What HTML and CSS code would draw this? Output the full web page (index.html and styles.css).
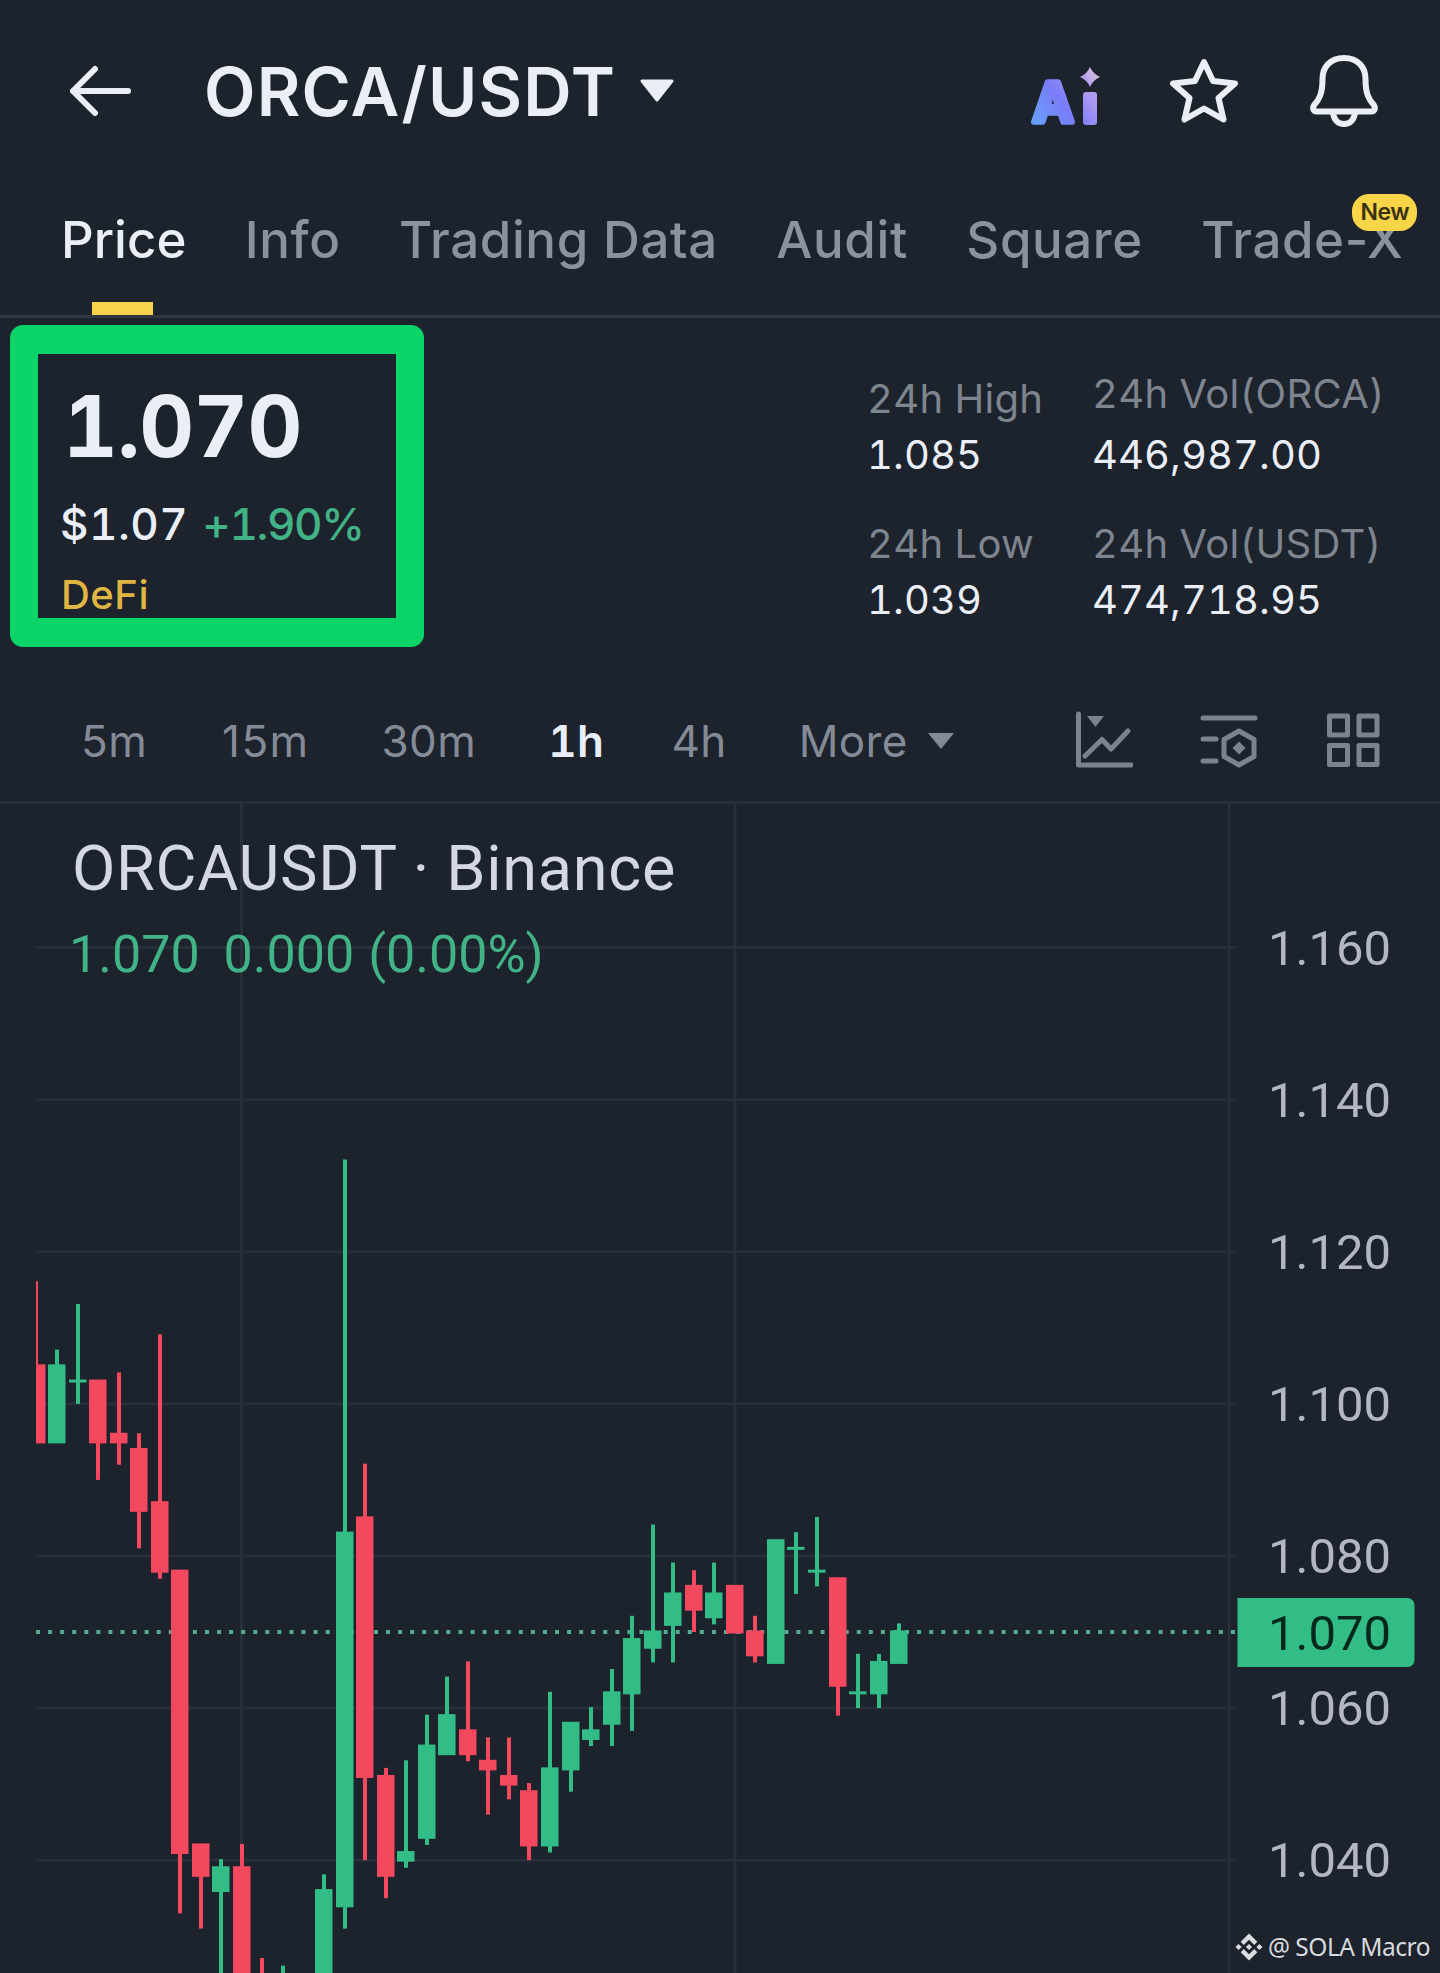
FILE: index.html
```
<!DOCTYPE html>
<html lang="en">
<head>
  <meta charset="UTF-8">
  <meta name="viewport" content="width=device-width, initial-scale=1.0">
  <title>ORCA/USDT</title>
  <link rel="stylesheet" href="styles.css">
</head>
<body>
  <div class="app">
    <header class="header">
      <svg class="back" width="64" height="52" viewBox="0 0 64 52">
        <path d="M26 4 L4 26 L26 48 M4 26 H59" />
      </svg>
      <h1 class="pair">ORCA/USDT</h1>
      <svg class="pair-caret" width="36" height="24" viewBox="0 0 36 24">
        <path d="M3 2 H33 L18 21 Z" />
      </svg>
      <div class="header-icons">
        <svg class="ai" width="76" height="64" viewBox="0 0 76 64">
          <defs>
            <linearGradient id="ai-fill" gradientUnits="userSpaceOnUse" x1="2" y1="60" x2="74" y2="10">
              <stop offset="0" stop-color="#62a6fb" />
              <stop offset="0.45" stop-color="#7a7cf8" />
              <stop offset="0.8" stop-color="#b49cf0" />
              <stop offset="1" stop-color="#d9c6d8" />
            </linearGradient>
          </defs>
          <text class="ai-letter" x="26" y="57.5" text-anchor="middle">A</text>
          <rect x="56" y="28" width="14" height="33" rx="3" />
          <path d="M63 3 Q66 10 73 13 Q66 16 63 23 Q60 16 53 13 Q60 10 63 3 Z" />
        </svg>
        <svg class="star" width="70" height="68" viewBox="0 0 70 68">
          <path d="M35 5 L44 24 L66 26.500 L49.500 41 L54.500 62.500 L35 51.500 L15.500 62.500 L20.500 41 L4 26.500 L26 24 Z" />
        </svg>
        <svg class="bell" width="70" height="76" viewBox="0 0 70 76">
          <path d="M35 5 C21 5 13.500 14.500 13.500 26 C13.500 41 10 46.500 5.500 51.500 C3 55 4 58.500 8 58.500 H62 C66 58.500 67 55 64.500 51.500 C60 46.500 56.500 41 56.500 26 C56.500 14.500 49 5 35 5 Z" />
          <path d="M24 60 C25 67 29 71 35 71 C41 71 45 67 46 60" />
        </svg>
      </div>
    </header>

    <nav class="tabs">
      <a class="tab active">Price</a>
      <a class="tab">Info</a>
      <a class="tab">Trading Data</a>
      <a class="tab">Audit</a>
      <a class="tab">Square</a>
      <a class="tab">Trade-X<span class="badge">New</span></a>
    </nav>

    <section class="summary">
      <div class="price-box">
        <div class="last-price">1.070</div>
        <div class="price-row">
          <span class="fiat">$1.07</span>
          <span class="change">+1.90%</span>
        </div>
        <div class="tag">DeFi</div>
      </div>
      <div class="stats">
        <div class="stats-col prices">
          <div class="label">24h High</div>
          <div class="value">1.085</div>
          <div class="label">24h Low</div>
          <div class="value">1.039</div>
        </div>
        <div class="stats-col volumes">
          <div class="label">24h Vol(ORCA)</div>
          <div class="value">446,987.00</div>
          <div class="label">24h Vol(USDT)</div>
          <div class="value">474,718.95</div>
        </div>
      </div>
    </section>

    <div class="toolbar">
      <div class="intervals">
        <span>5m</span>
        <span>15m</span>
        <span>30m</span>
        <span class="active">1h</span>
        <span>4h</span>
        <span>More</span>
      </div>
      <svg class="more-caret" width="30" height="20" viewBox="0 0 30 20">
        <path d="M2 2 H28 L15 18 Z" />
      </svg>
      <div class="tools">
        <svg width="58" height="58" viewBox="0 0 58 58">
          <path class="line" d="M3.500 3 V54 H56 M10 45 L27 28.500 L36 38 L53 20" />
          <path class="solid" d="M12 5 H29 L20.500 16 Z" />
        </svg>
        <svg width="58" height="58" viewBox="0 0 58 58">
          <path class="line" d="M3 7 H55 M3 28 H16 M3 50 H16 M39 20 L54 28.500 V45.500 L39 54 L24 45.500 V28.500 Z" />
          <path class="solid" d="M39 30.500 L45.500 37 L39 43.500 L32.500 37 Z" />
        </svg>
        <svg width="58" height="58" viewBox="0 0 58 58">
          <path class="line" d="M4.500 5 H22.500 V24 H4.500 Z M34 5 H52 V24 H34 Z M4.500 34.500 H22.500 V53.500 H4.500 Z M34 34.500 H52 V53.500 H34 Z" />
        </svg>
      </div>
    </div>

    <section class="chart">
      <svg id="chart" width="1440" height="1169" viewBox="0 0 1440 1169"></svg>
      <div class="legend">
        <div class="symbol">ORCAUSDT · Binance</div>
        <div class="ohlc"><span>1.070</span><span>0.000</span><span>(0.00%)</span></div>
      </div>
      <div class="watermark">
        <svg width="28" height="28" viewBox="0 0 28 28">
          <path d="M14 0.500 L22.300 8.800 L19.200 11.900 L14 6.700 L8.800 11.900 L5.700 8.800 Z" />
          <path d="M14 27.500 L22.300 19.200 L19.200 16.100 L14 21.300 L8.800 16.100 L5.700 19.200 Z" />
          <path d="M14 10.900 L17.100 14 L14 17.100 L10.900 14 Z M3.600 10.900 L6.700 14 L3.600 17.100 L0.500 14 Z M24.400 10.900 L27.500 14 L24.400 17.100 L21.300 14 Z" />
        </svg>
        <span>@ SOLA Macro</span>
      </div>
    </section>
  </div>

  <script>
    // [open, high, low, close]
    const candles = [
      [1.105, 1.116, 1.095, 1.095],
      [1.095, 1.107, 1.095, 1.105],
      [1.103, 1.113, 1.100, 1.103],
      [1.103, 1.103, 1.090, 1.095],
      [1.096, 1.104, 1.092, 1.095],
      [1.094, 1.096, 1.081, 1.086],
      [1.087, 1.109, 1.077, 1.078],
      [1.078, 1.078, 1.033, 1.041],
      [1.042, 1.042, 1.031, 1.038],
      [1.036, 1.040, 1.018, 1.039],
      [1.039, 1.042, 1.015, 1.018],
      [1.020, 1.027, 1.012, 1.018],
      [1.018, 1.026, 1.012, 1.020],
      [1.018, 1.025, 1.012, 1.020],
      [1.020, 1.038, 1.015, 1.036],
      [1.034, 1.132, 1.031, 1.083],
      [1.085, 1.092, 1.040, 1.051],
      [1.051, 1.052, 1.035, 1.038],
      [1.040, 1.053, 1.039, 1.041],
      [1.043, 1.059, 1.042, 1.055],
      [1.054, 1.064, 1.054, 1.059],
      [1.057, 1.066, 1.053, 1.054],
      [1.053, 1.056, 1.046, 1.052],
      [1.051, 1.056, 1.048, 1.050],
      [1.049, 1.050, 1.040, 1.042],
      [1.042, 1.062, 1.041, 1.052],
      [1.052, 1.058, 1.049, 1.058],
      [1.056, 1.060, 1.055, 1.057],
      [1.058, 1.065, 1.055, 1.062],
      [1.062, 1.072, 1.057, 1.069],
      [1.068, 1.084, 1.066, 1.070],
      [1.071, 1.079, 1.066, 1.075],
      [1.076, 1.078, 1.070, 1.073],
      [1.072, 1.079, 1.071, 1.075],
      [1.076, 1.076, 1.070, 1.070],
      [1.070, 1.072, 1.066, 1.067],
      [1.066, 1.082, 1.066, 1.082],
      [1.081, 1.083, 1.075, 1.081],
      [1.078, 1.085, 1.076, 1.078],
      [1.077, 1.077, 1.059, 1.063],
      [1.062, 1.067, 1.060, 1.062],
      [1.062, 1.067, 1.060, 1.066],
      [1.066, 1.071, 1.066, 1.070]
    ];

    const chart = document.getElementById('chart');
    const left = 36;
    const step = 20.54;
    const lastPrice = 1.070;

    function priceToY(price) {
      return 828 - (price - lastPrice) * 7605;
    }

    function draw(tag, attrs, text) {
      const el = document.createElementNS('http://www.w3.org/2000/svg', tag);
      for (const key in attrs) {
        el.setAttribute(key, attrs[key]);
      }
      if (text) {
        el.textContent = text;
      }
      chart.appendChild(el);
    }

    function drawGrid() {
      [241.5, 735, 1229].forEach(x => {
        draw('line', { class: 'grid', x1: x, x2: x, y1: 0, y2: 1169 });
      });
      [1.16, 1.14, 1.12, 1.1, 1.08, 1.06, 1.04].forEach(price => {
        const y = priceToY(price);
        draw('line', { class: 'grid', x1: left, x2: 1236, y1: y, y2: y });
        draw('text', { class: 'axis-label', x: 1268, y: y + 17 }, price.toFixed(3));
      });
    }

    function drawCandles() {
      candles.forEach(([open, high, low, close], i) => {
        const x = Math.round(36.5 + i * step);
        const cls = close >= open ? 'up' : 'down';
        const start = Math.max(x - 9, left);
        const top = priceToY(Math.max(open, close)) - 1.5;
        const bottom = priceToY(Math.min(open, close)) + 1.5;
        const wickTop = priceToY(high) - 1;
        const wickX = Math.max(x - 2, left);
        draw('rect', { class: cls, x: wickX, y: wickTop, width: i ? 4 : 2, height: priceToY(low) - wickTop });
        draw('rect', { class: cls, x: start, y: top, width: x + 8.5 - start, height: bottom - top });
      });
    }

    function drawLastPrice() {
      const y = priceToY(lastPrice);
      draw('path', { class: 'tag-bg', d: `M1237.5 ${y - 34} h170 a7 7 0 0 1 7 7 v55 a7 7 0 0 1 -7 7 h-170 z` });
      draw('text', { class: 'axis-label current', x: 1268, y: y + 17.5 }, lastPrice.toFixed(3));
    }

    drawGrid();
    draw('line', { class: 'last-line', x1: left, x2: 1236, y1: priceToY(lastPrice), y2: priceToY(lastPrice) });
    drawCandles();
    drawLastPrice();
  </script>
</body>
</html>
```
FILE: styles.css
```
* {
  box-sizing: border-box;
}

body {
  margin: 0;
  background-color: #1d232d;
  color: #eaeef7;
  font-family: Inter, Roboto, sans-serif;
}

.app {
  width: 1440px;
  height: 1973px;
  overflow: hidden;
}

.header {
  display: flex;
  align-items: center;
  height: 182px;
  padding: 0 61px 0 69px;
}

.back path {
  fill: none;
  stroke: #eaeef7;
  stroke-width: 6;
  stroke-linecap: round;
  stroke-linejoin: round;
}

.pair {
  margin: 1px 0 0 71px;
  font-size: 67px;
  font-weight: 600;
  letter-spacing: 1.2px;
  line-height: 80px;
}

.pair-caret {
  margin-left: 23px;
  fill: #eaeef7;
  stroke: #eaeef7;
  stroke-width: 3;
  stroke-linejoin: round;
}

.header-icons {
  display: flex;
  align-items: center;
  margin: -1px 0 0 auto;
}

.ai {
  overflow: visible;
  margin: 11px 66px 0 0;
  fill: url(#ai-fill);
}

.ai-letter {
  font-size: 55px;
  font-weight: 700;
  stroke: url(#ai-fill);
  stroke-width: 5.5;
  stroke-linejoin: round;
}

.star {
  margin-right: 70px;
}

.star path,
.bell path {
  fill: none;
  stroke: #eaeef7;
  stroke-width: 6;
  stroke-linejoin: round;
}

.tabs {
  display: flex;
  gap: 58.5px;
  height: 136px;
  padding-left: 61px;
  border-bottom: 3px solid #323842;
}

.tab {
  position: relative;
  color: #8b919d;
  font-size: 51px;
  font-weight: 500;
  letter-spacing: 0.6px;
  line-height: 116px;
  white-space: nowrap;
}

.tab.active {
  color: #eaeef7;
  letter-spacing: 0;
}

.tab.active::after {
  content: "";
  position: absolute;
  left: 31px;
  bottom: 0;
  width: 61px;
  height: 13px;
  background-color: #f6d34b;
}

.badge {
  position: absolute;
  top: 12px;
  right: -14px;
  width: 65px;
  height: 37px;
  border-radius: 17px;
  background-color: #f8d548;
  color: #3a3013;
  font-size: 23px;
  font-weight: 600;
  letter-spacing: -0.5px;
  line-height: 37px;
  text-align: center;
}

.summary {
  display: flex;
  height: 362px;
  font-variant-numeric: tabular-nums;
}

.price-box {
  width: 414px;
  height: 322px;
  margin: 7px 0 0 10px;
  padding-left: 23px;
  border: 29px solid #0bd468;
  border-width: 29px 28px;
  border-radius: 13px;
}

.last-price {
  margin-left: 2px;
  font-size: 85px;
  font-weight: 700;
  letter-spacing: -0.8px;
  line-height: 146px;
}

.price-row {
  display: flex;
  gap: 14px;
  margin: -2px 0 0 -1px;
  font-size: 44px;
  font-weight: 500;
  line-height: 52px;
}

.fiat {
  letter-spacing: 0.5px;
}

.change {
  color: #42b386;
  letter-spacing: -1.4px;
}

.tag {
  padding-top: 21px;
  color: #dfb544;
  font-size: 40px;
  font-weight: 500;
  letter-spacing: 0.5px;
  line-height: 47px;
}

.stats {
  display: flex;
  margin-left: 443px;
  padding-top: 51px;
  font-size: 40px;
  line-height: 50px;
  white-space: nowrap;
}

.stats-col {
  width: 225px;
}

.prices {
  padding-top: 5px;
}

.label {
  color: #7f858f;
  letter-spacing: 0.3px;
}

.value {
  margin: 6px 0 39px;
  letter-spacing: 0.1px;
}

.volumes .value:nth-child(2) {
  margin-top: 11px;
}

.toolbar {
  display: flex;
  align-items: center;
  height: 124px;
  padding: 0 57px 0 81px;
  border-bottom: 3px solid #272c36;
}

.intervals {
  display: flex;
  gap: 72px;
  color: #858b96;
  font-size: 44px;
  letter-spacing: 0.4px;
}

.intervals span:nth-child(2) {
  margin-left: 3px;
  letter-spacing: 1.4px;
}

.intervals .active {
  margin-right: -5px;
  color: #eaeef7;
  font-weight: 600;
  font-variant-numeric: tabular-nums;
}

.more-caret {
  margin-left: 18px;
  fill: #858b96;
}

.tools {
  display: flex;
  gap: 67px;
  margin: -2px 0 0 auto;
}

.tools .line {
  fill: none;
  stroke: #7c828e;
  stroke-width: 5;
  stroke-linecap: round;
  stroke-linejoin: round;
}

.tools .solid {
  fill: #7c828e;
}

.chart {
  position: relative;
  height: 1169px;
  font-family: Roboto, sans-serif;
}

.chart > svg {
  display: block;
}

.grid {
  stroke: #292f39;
  stroke-width: 3;
}

.axis-label {
  fill: #b2b7c2;
  font-size: 49px;
}

.axis-label.current {
  fill: #06281c;
}

.last-line {
  stroke: #55ad8c;
  stroke-width: 4;
  stroke-dasharray: 4 8.07;
}

.up,
.tag-bg {
  fill: #32bd86;
}

.down {
  fill: #f4485e;
}

/* symbol name and last change, drawn over the top left of the chart */
.legend {
  position: absolute;
  top: 24px;
  left: 72px;
}

.symbol {
  color: #d3d8e2;
  font-size: 63px;
  letter-spacing: 0.7px;
  line-height: 82px;
}

.ohlc {
  display: flex;
  margin-left: -3px;
  color: #42b386;
  font-size: 52px;
  line-height: 90px;
}

.ohlc span:nth-child(2) {
  margin-left: 24px;
}

.ohlc span:nth-child(3) {
  margin-left: 14px;
}

.watermark {
  position: absolute;
  right: 10px;
  bottom: 8px;
  display: flex;
  align-items: center;
  gap: 5px;
  color: #d9dbde;
  font-family: "Noto Sans", sans-serif;
  font-size: 24.5px;
  letter-spacing: -0.5px;
  line-height: 36px;
}

.watermark svg {
  fill: #d9dbde;
}
```
